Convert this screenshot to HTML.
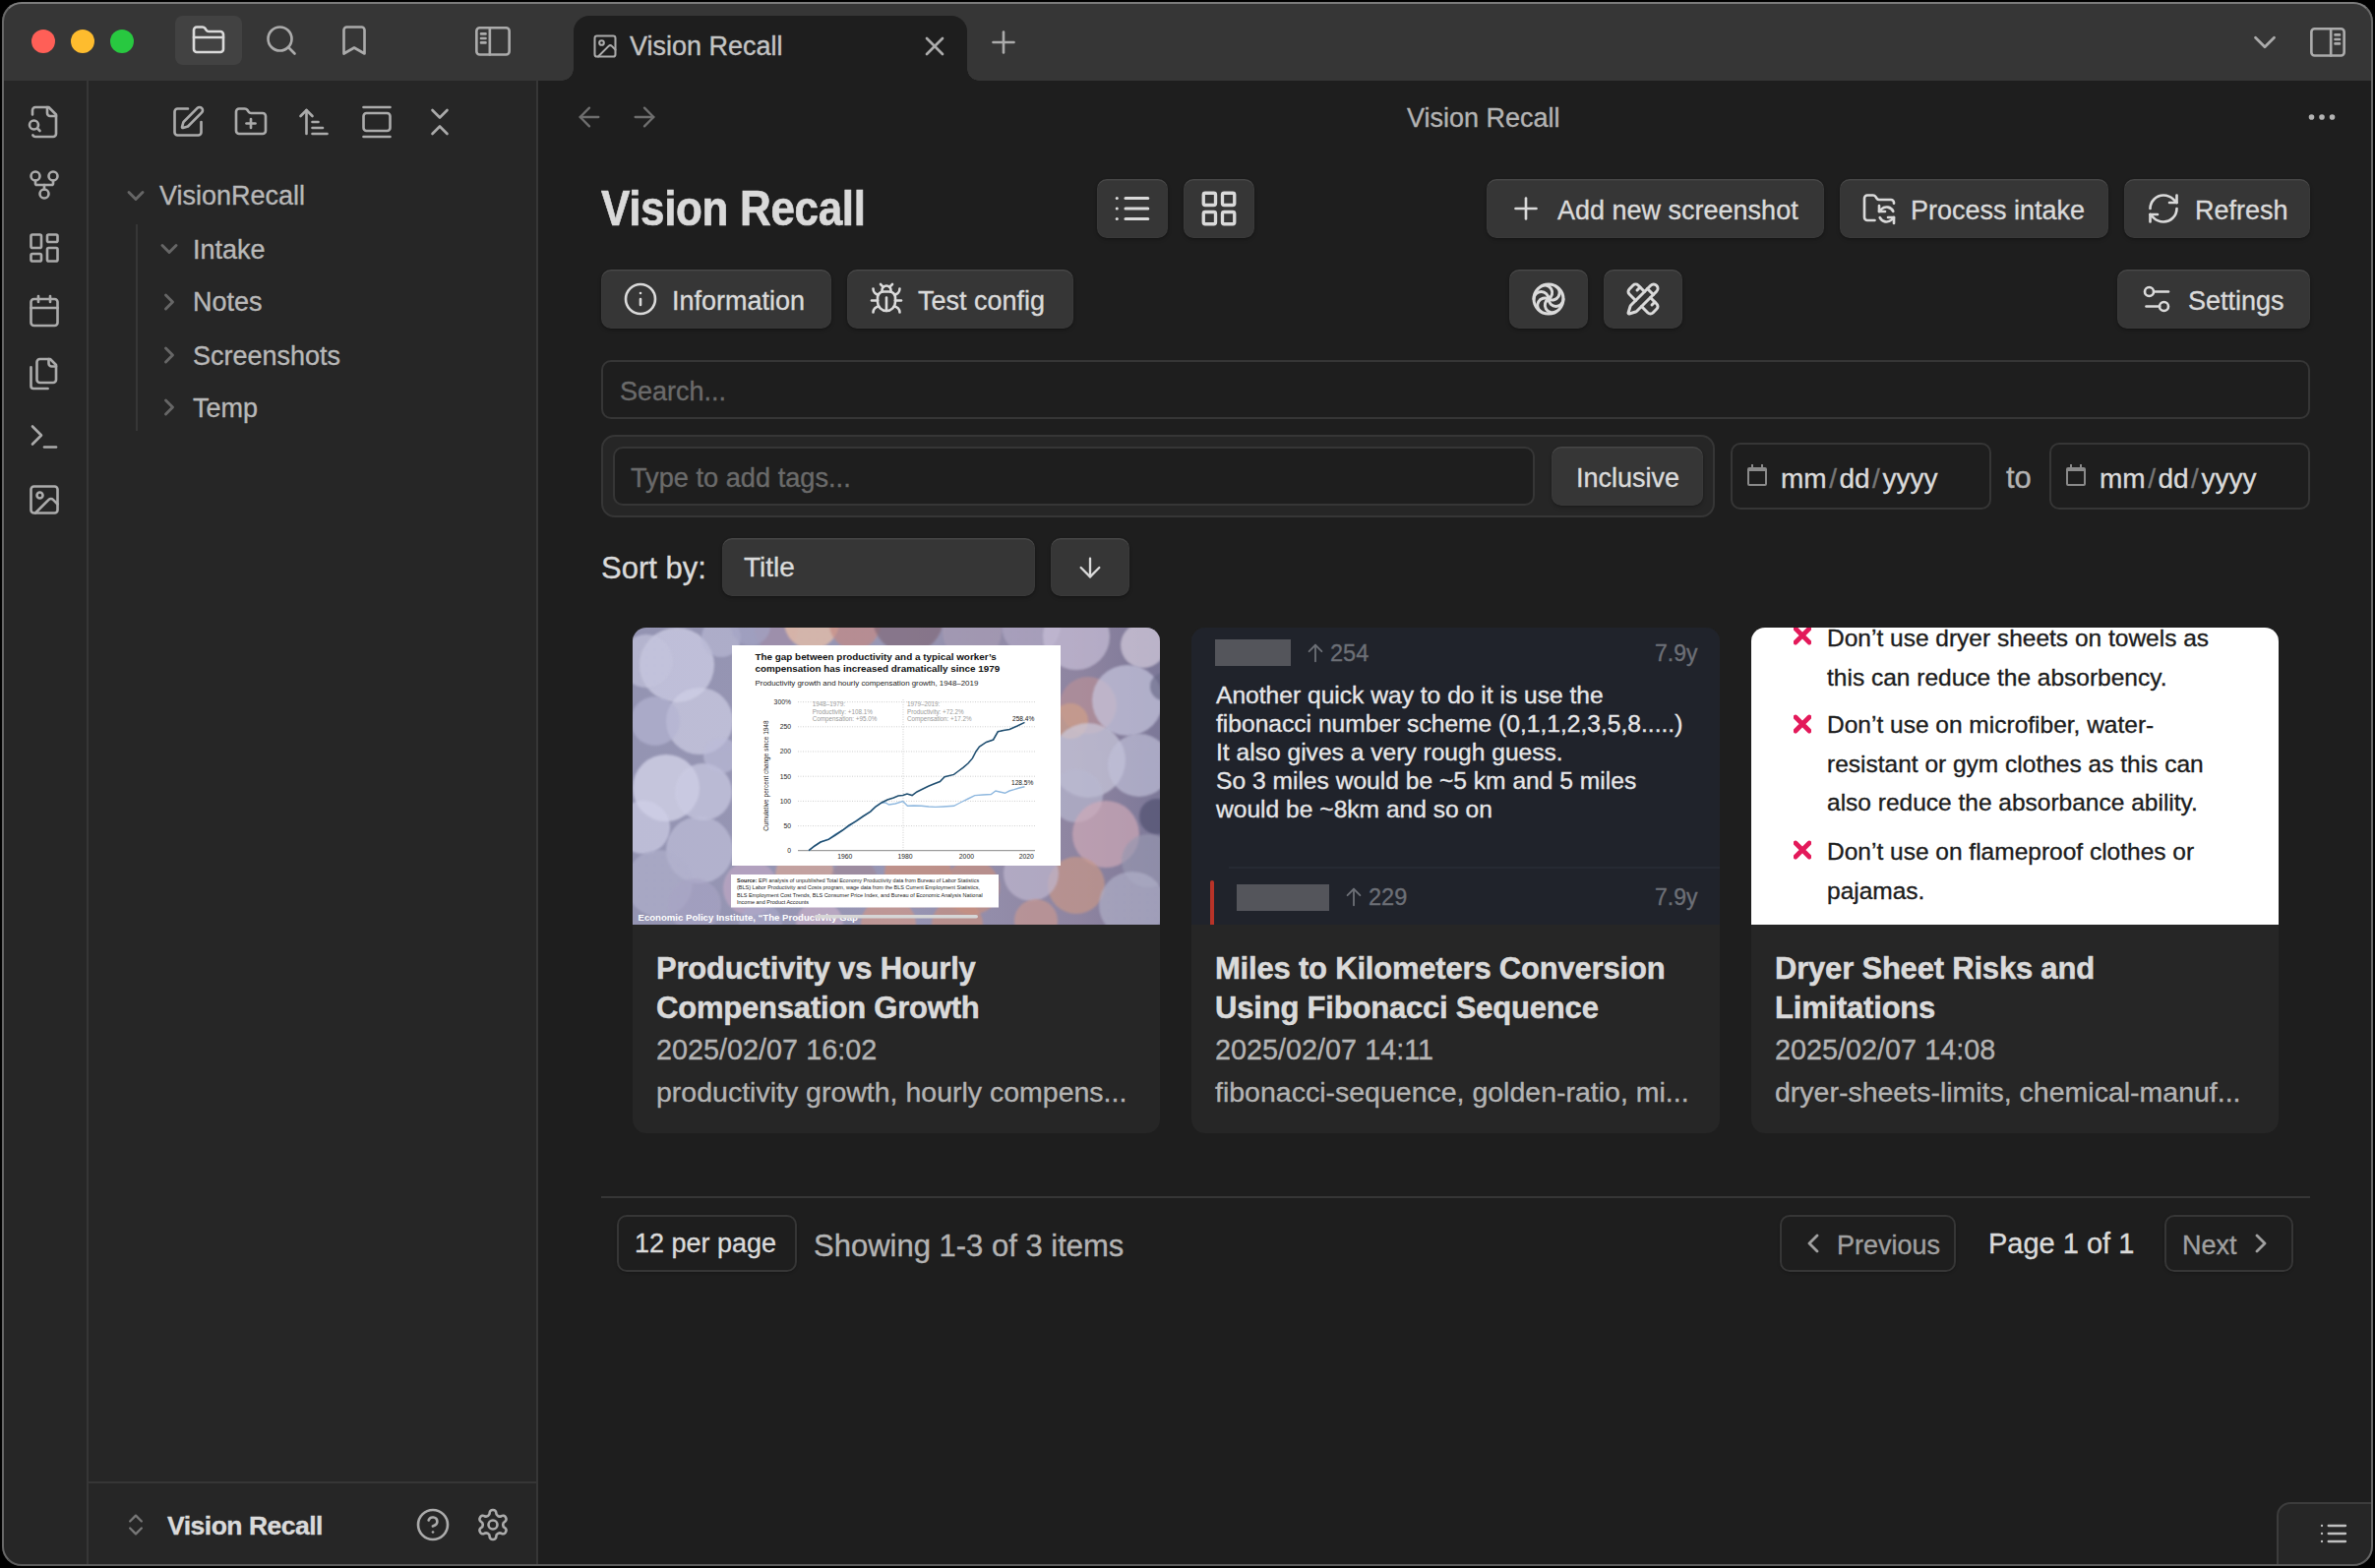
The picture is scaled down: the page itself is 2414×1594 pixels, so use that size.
<!DOCTYPE html>
<html><head><meta charset="utf-8">
<style>
*{box-sizing:border-box;margin:0;padding:0}
html,body{width:2414px;height:1594px;overflow:hidden;background:#1e1e1e}
body{font-family:"Liberation Sans",sans-serif;color:#dadada;position:relative}
.t,.ct{-webkit-text-stroke:0.35px currentColor}
.a{position:absolute}
svg.i{position:absolute;fill:none;stroke:currentColor;stroke-linecap:round;stroke-linejoin:round;overflow:visible}
.frame{position:absolute;left:2px;top:2px;width:2410px;height:1590px;border-radius:20px;border:2px solid #686868;border-top-color:#7c7c7c;border-bottom-color:#5c5c5c;box-shadow:0 0 0 60px #000;pointer-events:none;z-index:50}
.t{position:absolute;white-space:pre;line-height:1}
.btn{position:absolute;background:#363636;border-radius:10px;box-shadow:inset 0 1.5px 0.5px rgba(255,255,255,.08),inset 0 0 0 1px rgba(255,255,255,.02),0 2px 4px rgba(0,0,0,.15),0 1px 2px rgba(0,0,0,.2)}
.inp{position:absolute;border:2px solid #363636;border-radius:10px;background:#1e1e1e}
.ri{color:#ababab}
</style></head><body>
<!-- ===== TITLE BAR ===== -->
<div class="a" style="left:0;top:0;width:2414px;height:82px;background:#363636"></div>
<div class="a" style="left:32px;top:30px;width:24px;height:24px;border-radius:50%;background:#ff5f57"></div>
<div class="a" style="left:72px;top:30px;width:24px;height:24px;border-radius:50%;background:#febc2e"></div>
<div class="a" style="left:112px;top:30px;width:24px;height:24px;border-radius:50%;background:#28c840"></div>
<div class="a" style="left:178px;top:16px;width:68px;height:50px;border-radius:8px;background:#424242"></div>
<svg class="i" style="left:194px;top:23px;color:#dadada" width="36" height="36" viewBox="0 0 24 24" stroke-width="1.75"><path d="M20 20a2 2 0 0 0 2-2V8a2 2 0 0 0-2-2h-7.9a2 2 0 0 1-1.69-.9L9.6 3.9A2 2 0 0 0 7.93 3H4a2 2 0 0 0-2 2v13a2 2 0 0 0 2 2Z"/><path d="M2 10h20"/></svg>
<svg class="i ri" style="left:268px;top:23px" width="36" height="36" viewBox="0 0 24 24" stroke-width="1.75"><circle cx="11" cy="11" r="8"/><path d="m21 21-4.3-4.3"/></svg>
<svg class="i ri" style="left:342px;top:23px" width="36" height="36" viewBox="0 0 24 24" stroke-width="1.75"><path d="m19 21-7-4-7 4V5a2 2 0 0 1 2-2h10a2 2 0 0 1 2 2v16z"/></svg>
<svg class="i ri" style="left:483px;top:23px" width="36" height="36" viewBox="0 0 24 24" stroke-width="1.75"><rect x="0.9" y="3.5" width="22.2" height="18.2" rx="2.2"/><path d="M9.9 3.5v18.2"/><path d="M4 7.6h3M4 10.7h3M4 13.6h3"/></svg>
<!-- tab -->
<div class="a" style="left:583px;top:16px;width:400px;height:66px;background:#1e1e1e;border-radius:16px 16px 0 0"></div>
<div class="a" style="left:571px;top:70px;width:12px;height:12px;background:radial-gradient(circle at 0 0,#363636 11.5px,#1e1e1e 12px)"></div>
<div class="a" style="left:983px;top:70px;width:12px;height:12px;background:radial-gradient(circle at 100% 0,#363636 11.5px,#1e1e1e 12px)"></div>
<svg class="i ri" style="left:601px;top:33px" width="28" height="28" viewBox="0 0 24 24" stroke-width="1.75"><rect width="18" height="18" x="3" y="3" rx="2" ry="2"/><circle cx="9" cy="9" r="2"/><path d="m21 15-3.086-3.086a2 2 0 0 0-2.828 0L6 21"/></svg>
<div class="t" style="left:640px;top:34px;font-size:27px;color:#c4c4c4">Vision Recall</div>
<svg class="i ri" style="left:934px;top:31px" width="32" height="32" viewBox="0 0 24 24" stroke-width="2"><path d="M18 6 6 18"/><path d="m6 6 12 12"/></svg>
<svg class="i ri" style="left:1002px;top:25px" width="36" height="36" viewBox="0 0 24 24" stroke-width="1.75"><path d="M5 12h14"/><path d="M12 5v14"/></svg>
<svg class="i ri" style="left:2283px;top:24px" width="38" height="38" viewBox="0 0 24 24" stroke-width="1.75"><path d="m6 9 6 6 6-6"/></svg>
<svg class="i ri" style="left:2348px;top:24px" width="36" height="36" viewBox="0 0 24 24" stroke-width="1.75"><rect x="0.9" y="3.5" width="22.2" height="18.2" rx="2.2"/><path d="M14.1 3.5v18.2"/><path d="M17 7.6h3M17 10.7h3M17 13.6h3"/></svg>

<!-- ===== RIBBON ===== -->
<div class="a" style="left:0;top:82px;width:88px;height:1513px;background:#262626"></div>
<div class="a" style="left:88px;top:82px;width:2px;height:1513px;background:#363636"></div>
<svg class="i ri" style="left:27px;top:106px" width="36" height="36" viewBox="0 0 24 24" stroke-width="1.75"><path d="M14 2v4a2 2 0 0 0 2 2h4"/><path d="M4.268 21a2 2 0 0 0 1.727 1H18a2 2 0 0 0 2-2V7l-5-5H6a2 2 0 0 0-2 2v3"/><path d="m9 18-1.5-1.5"/><circle cx="5" cy="14" r="3"/></svg>
<svg class="i ri" style="left:27px;top:170px" width="36" height="36" viewBox="0 0 24 24" stroke-width="1.75"><circle cx="12" cy="18" r="3"/><circle cx="6" cy="6" r="3"/><circle cx="18" cy="6" r="3"/><path d="M18 9v2c0 .6-.4 1-1 1H7c-.6 0-1-.4-1-1V9"/><path d="M12 12v3"/></svg>
<svg class="i ri" style="left:27px;top:234px" width="36" height="36" viewBox="0 0 24 24" stroke-width="1.75"><rect width="7" height="9" x="3" y="3" rx="1"/><rect width="7" height="5" x="14" y="3" rx="1"/><rect width="7" height="9" x="14" y="12" rx="1"/><rect width="7" height="5" x="3" y="16" rx="1"/></svg>
<svg class="i ri" style="left:27px;top:298px" width="36" height="36" viewBox="0 0 24 24" stroke-width="1.75"><path d="M8 2v4"/><path d="M16 2v4"/><rect width="18" height="18" x="3" y="4" rx="2"/><path d="M3 10h18"/></svg>
<svg class="i ri" style="left:27px;top:362px" width="36" height="36" viewBox="0 0 24 24" stroke-width="1.75"><path d="M20 7h-3a2 2 0 0 1-2-2V2"/><path d="M9 18a2 2 0 0 1-2-2V4a2 2 0 0 1 2-2h7l4 4v10a2 2 0 0 1-2 2Z"/><path d="M3 7.6v12.8A1.6 1.6 0 0 0 4.6 22h9.8"/></svg>
<svg class="i ri" style="left:27px;top:426px" width="36" height="36" viewBox="0 0 24 24" stroke-width="1.75"><polyline points="4 17 10 11 4 5"/><line x1="12" x2="20" y1="19" y2="19"/></svg>
<svg class="i ri" style="left:27px;top:490px" width="36" height="36" viewBox="0 0 24 24" stroke-width="1.75"><rect width="18" height="18" x="3" y="3" rx="2" ry="2"/><circle cx="9" cy="9" r="2"/><path d="m21 15-3.086-3.086a2 2 0 0 0-2.828 0L6 21"/></svg>

<!-- ===== SIDEBAR ===== -->
<div class="a" style="left:90px;top:82px;width:455px;height:1513px;background:#262626"></div>
<div class="a" style="left:545px;top:82px;width:2px;height:1513px;background:#363636"></div>
<svg class="i ri" style="left:173px;top:106px" width="36" height="36" viewBox="0 0 24 24" stroke-width="1.75"><path d="M12 3H5a2 2 0 0 0-2 2v14a2 2 0 0 0 2 2h14a2 2 0 0 0 2-2v-7"/><path d="M18.375 2.625a1 1 0 0 1 3 3l-9.013 9.014a2 2 0 0 1-.853.505l-2.873.84a.5.5 0 0 1-.62-.62l.84-2.873a2 2 0 0 1 .506-.852z"/></svg>
<svg class="i ri" style="left:237px;top:106px" width="36" height="36" viewBox="0 0 24 24" stroke-width="1.75"><path d="M12 10v6"/><path d="M9 13h6"/><path d="M20 20a2 2 0 0 0 2-2V8a2 2 0 0 0-2-2h-7.9a2 2 0 0 1-1.69-.9L9.6 3.9A2 2 0 0 0 7.93 3H4a2 2 0 0 0-2 2v13a2 2 0 0 0 2 2Z"/></svg>
<svg class="i ri" style="left:301px;top:106px" width="36" height="36" viewBox="0 0 24 24" stroke-width="1.75"><path d="m3 8 4-4 4 4"/><path d="M7 4v16"/><path d="M11 12h4"/><path d="M11 16h7"/><path d="M11 20h10"/></svg>
<svg class="i ri" style="left:365px;top:106px" width="36" height="36" viewBox="0 0 24 24" stroke-width="1.75"><path d="M3 2h18"/><rect width="18" height="12" x="3" y="6" rx="2"/><path d="M3 22h18"/></svg>
<svg class="i ri" style="left:429px;top:106px" width="36" height="36" viewBox="0 0 24 24" stroke-width="1.75"><path d="m7 20 5-5 5 5"/><path d="m7 4 5 5 5-5"/></svg>
<!-- tree -->
<svg class="i" style="left:124px;top:185px;color:#666" width="28" height="28" viewBox="0 0 24 24" stroke-width="2.5"><path d="m6 9 6 6 6-6"/></svg>
<div class="t" style="left:162px;top:186px;font-size:27px;color:#b8b8b8">VisionRecall</div>
<div class="a" style="left:138px;top:228px;width:2px;height:210px;background:#363636"></div>
<svg class="i" style="left:158px;top:239px;color:#666" width="28" height="28" viewBox="0 0 24 24" stroke-width="2.5"><path d="m6 9 6 6 6-6"/></svg>
<div class="t" style="left:196px;top:241px;font-size:27px;color:#b8b8b8">Intake</div>
<svg class="i" style="left:158px;top:293px;color:#666" width="28" height="28" viewBox="0 0 24 24" stroke-width="2.5"><path d="m9 18 6-6-6-6"/></svg>
<div class="t" style="left:196px;top:294px;font-size:27px;color:#b8b8b8">Notes</div>
<svg class="i" style="left:158px;top:347px;color:#666" width="28" height="28" viewBox="0 0 24 24" stroke-width="2.5"><path d="m9 18 6-6-6-6"/></svg>
<div class="t" style="left:196px;top:349px;font-size:27px;color:#b8b8b8">Screenshots</div>
<svg class="i" style="left:158px;top:400px;color:#666" width="28" height="28" viewBox="0 0 24 24" stroke-width="2.5"><path d="m9 18 6-6-6-6"/></svg>
<div class="t" style="left:196px;top:402px;font-size:27px;color:#b8b8b8">Temp</div>
<!-- sidebar footer -->
<div class="a" style="left:90px;top:1506px;width:455px;height:2px;background:#363636"></div>
<svg class="i" style="left:124px;top:1536px;color:#777" width="28" height="28" viewBox="0 0 24 24" stroke-width="2"><path d="m7 15 5 5 5-5"/><path d="m7 9 5-5 5 5"/></svg>
<div class="t" style="left:170px;top:1538px;font-size:26.5px;letter-spacing:-0.5px;font-weight:700;color:#dadada">Vision Recall</div>
<svg class="i ri" style="left:422px;top:1532px" width="36" height="36" viewBox="0 0 24 24" stroke-width="1.75"><circle cx="12" cy="12" r="10"/><path d="M9.09 9a3 3 0 0 1 5.83 1c0 2-3 3-3 3"/><path d="M12 17h.01"/></svg>
<svg class="i ri" style="left:483px;top:1532px" width="36" height="36" viewBox="0 0 24 24" stroke-width="1.75"><path d="M12.22 2h-.44a2 2 0 0 0-2 2v.18a2 2 0 0 1-1 1.73l-.43.25a2 2 0 0 1-2 0l-.15-.08a2 2 0 0 0-2.73.73l-.22.38a2 2 0 0 0 .73 2.73l.15.1a2 2 0 0 1 1 1.72v.51a2 2 0 0 1-1 1.74l-.15.09a2 2 0 0 0-.73 2.73l.22.38a2 2 0 0 0 2.73.73l.15-.08a2 2 0 0 1 2 0l.43.25a2 2 0 0 1 1 1.73V20a2 2 0 0 0 2 2h.44a2 2 0 0 0 2-2v-.18a2 2 0 0 1 1-1.73l.43-.25a2 2 0 0 1 2 0l.15.08a2 2 0 0 0 2.73-.73l.22-.39a2 2 0 0 0-.73-2.73l-.15-.08a2 2 0 0 1-1-1.74v-.5a2 2 0 0 1 1-1.74l.15-.09a2 2 0 0 0 .73-2.73l-.22-.38a2 2 0 0 0-2.73-.73l-.15.08a2 2 0 0 1-2 0l-.43-.25a2 2 0 0 1-1-1.73V4a2 2 0 0 0-2-2z"/><circle cx="12" cy="12" r="3"/></svg>

<!-- ===== MAIN ===== -->
<!-- view header -->
<svg class="i" style="left:583px;top:103px;color:#6e6e6e" width="32" height="32" viewBox="0 0 24 24" stroke-width="1.75"><path d="m12 19-7-7 7-7"/><path d="M19 12H5"/></svg>
<svg class="i" style="left:639px;top:103px;color:#6e6e6e" width="32" height="32" viewBox="0 0 24 24" stroke-width="1.75"><path d="M5 12h14"/><path d="m12 5 7 7-7 7"/></svg>
<div class="t" style="left:1430px;top:107px;font-size:27px;color:#b3b3b3">Vision Recall</div>
<svg class="i" style="left:2342px;top:101px;color:#b3b3b3" width="36" height="36" viewBox="0 0 24 24" stroke-width="1.75"><circle cx="12" cy="12" r="1" fill="currentColor"/><circle cx="19" cy="12" r="1" fill="currentColor"/><circle cx="5" cy="12" r="1" fill="currentColor"/></svg>

<!-- heading -->
<div class="t" style="left:611px;top:187px;font-size:50px;font-weight:700;letter-spacing:-0.4px;transform:scaleX(0.88);transform-origin:0 0;-webkit-text-stroke:0.7px #dadada;color:#dadada">Vision Recall</div>
<div class="btn" style="left:1115px;top:182px;width:72px;height:60px"></div>
<svg class="i" style="left:1130px;top:191px;color:#dadada" width="42" height="42" viewBox="0 0 24 24" stroke-width="1.75"><path d="M3 12h.01"/><path d="M3 18h.01"/><path d="M3 6h.01"/><path d="M8 12h13"/><path d="M8 18h13"/><path d="M8 6h13"/></svg>
<div class="btn" style="left:1203px;top:182px;width:72px;height:60px"></div>
<svg class="i" style="left:1218px;top:191px;color:#dadada" width="42" height="42" viewBox="0 0 24 24" stroke-width="1.9"><rect width="7" height="7" x="3" y="3" rx="1"/><rect width="7" height="7" x="14" y="3" rx="1"/><rect width="7" height="7" x="14" y="14" rx="1"/><rect width="7" height="7" x="3" y="14" rx="1"/></svg>

<div class="btn" style="left:1511px;top:182px;width:343px;height:60px"></div>
<svg class="i" style="left:1533px;top:194px;color:#dadada" width="36" height="36" viewBox="0 0 24 24" stroke-width="1.75"><path d="M5 12h14"/><path d="M12 5v14"/></svg>
<div class="t" style="left:1583px;top:201px;font-size:27px;color:#dadada">Add new screenshot</div>
<div class="btn" style="left:1870px;top:182px;width:273px;height:60px"></div>
<svg class="i" style="left:1892px;top:194px;color:#dadada" width="36" height="36" viewBox="0 0 24 24" stroke-width="1.75"><path d="M9 20H4a2 2 0 0 1-2-2V5a2 2 0 0 1 2-2h3.9a2 2 0 0 1 1.69.9l.81 1.2a2 2 0 0 0 1.67.9H20a2 2 0 0 1 2 2v.5"/><path d="M12 10v4h4"/><path d="m12 14 1.535-1.605a5 5 0 0 1 8 1.5"/><path d="M22 22v-4h-4"/><path d="m22 18-1.535 1.605a5 5 0 0 1-8-1.5"/></svg>
<div class="t" style="left:1942px;top:201px;font-size:27px;color:#dadada">Process intake</div>
<div class="btn" style="left:2159px;top:182px;width:189px;height:60px"></div>
<svg class="i" style="left:2181px;top:194px;color:#dadada" width="36" height="36" viewBox="0 0 24 24" stroke-width="1.75"><path d="M3 12a9 9 0 0 1 9-9 9.75 9.75 0 0 1 6.74 2.74L21 8"/><path d="M21 3v5h-5"/><path d="M21 12a9 9 0 0 1-9 9 9.75 9.75 0 0 1-6.74-2.74L3 16"/><path d="M8 16H3v5"/></svg>
<div class="t" style="left:2231px;top:201px;font-size:27px;color:#dadada">Refresh</div>

<!-- row 2 -->
<div class="btn" style="left:611px;top:274px;width:234px;height:60px"></div>
<svg class="i" style="left:633px;top:286px;color:#dadada" width="36" height="36" viewBox="0 0 24 24" stroke-width="1.75"><circle cx="12" cy="12" r="10"/><path d="M12 16v-4"/><path d="M12 8h.01"/></svg>
<div class="t" style="left:683px;top:293px;font-size:27px;color:#dadada">Information</div>
<div class="btn" style="left:861px;top:274px;width:230px;height:60px"></div>
<svg class="i" style="left:883px;top:286px;color:#dadada" width="36" height="36" viewBox="0 0 24 24" stroke-width="1.75"><path d="m8 2 1.88 1.88"/><path d="M14.12 3.88 16 2"/><path d="M9 7.13v-1a3.003 3.003 0 1 1 6 0v1"/><path d="M12 20c-3.3 0-6-2.7-6-6v-3a4 4 0 0 1 4-4h4a4 4 0 0 1 4 4v3c0 3.3-2.7 6-6 6"/><path d="M12 20v-9"/><path d="M6.530 9C4.6 8.8 3 7.1 3 5"/><path d="M6 13H2"/><path d="M3 21c0-2.1 1.7-3.9 3.8-4"/><path d="M20.97 5c0 2.1-1.6 3.8-3.5 4"/><path d="M22 13h-4"/><path d="M17.2 17c2.1.1 3.8 1.9 3.8 4"/></svg>
<div class="t" style="left:933px;top:293px;font-size:27px;color:#dadada">Test config</div>
<div class="btn" style="left:1534px;top:274px;width:80px;height:60px"></div>
<svg class="i" style="left:1556px;top:286px;color:#dadada" width="36" height="36" viewBox="0 0 24 24" stroke-width="2"><path d="M22 12a1 1 0 0 1-10 0 1 1 0 0 0-10 0"/><path d="M7 20.7a1 1 0 1 1 5-8.7 1 1 0 1 0 5-8.6"/><path d="M7 3.3a1 1 0 1 1 5 8.6 1 1 0 1 0 5 8.6"/><circle cx="12" cy="12" r="10"/></svg>
<div class="btn" style="left:1630px;top:274px;width:80px;height:60px"></div>
<svg class="i" style="left:1652px;top:286px;color:#dadada" width="36" height="36" viewBox="0 0 24 24" stroke-width="2"><path d="M13 7 8.7 2.7a2.41 2.41 0 0 0-3.4 0L2.7 5.3a2.41 2.41 0 0 0 0 3.4L7 13"/><path d="m8 6 2-2"/><path d="m18 16 2-2"/><path d="m17 11 4.3 4.3c.94.94.94 2.460 0 3.4l-2.6 2.6c-.94.94-2.46.94-3.4 0L11 17"/><path d="M21.174 6.812a1 1 0 0 0-3.986-3.987L3.842 16.174a2 2 0 0 0-.5.83l-1.321 4.352a.5.5 0 0 0 .623.622l4.353-1.32a2 2 0 0 0 .83-.497z"/><path d="m15 5 4 4"/></svg>
<div class="btn" style="left:2152px;top:274px;width:196px;height:60px"></div>
<svg class="i" style="left:2174px;top:286px;color:#dadada" width="36" height="36" viewBox="0 0 24 24" stroke-width="1.75"><path d="M20 7h-9"/><path d="M14 17H5"/><circle cx="17" cy="17" r="3"/><circle cx="7" cy="7" r="3"/></svg>
<div class="t" style="left:2224px;top:293px;font-size:27px;color:#dadada">Settings</div>

<!-- search -->
<div class="inp" style="left:611px;top:366px;width:1737px;height:60px"></div>
<div class="t" style="left:630px;top:385px;font-size:27px;color:#6a6a6a">Search...</div>

<!-- tags -->
<div class="a" style="left:611px;top:442px;width:1132px;height:84px;background:#262626;border:2px solid #363636;border-radius:14px"></div>
<div class="inp" style="left:623px;top:454px;width:937px;height:60px"></div>
<div class="t" style="left:641px;top:472px;font-size:27.2px;color:#6a6a6a">Type to add tags...</div>
<div class="btn" style="left:1577px;top:454px;width:154px;height:60px"></div>
<div class="t" style="left:1602px;top:473px;font-size:27px;color:#dadada">Inclusive</div>

<!-- dates -->
<div class="inp" style="left:1759px;top:450px;width:265px;height:68px"></div>
<div class="a" style="left:1776px;top:475px;width:20px;height:19px;border:2.2px solid #8a8a8a;border-top-width:4.5px;border-radius:2px"></div><div class="a" style="left:1780px;top:472px;width:2px;height:4px;background:#8a8a8a"></div><div class="a" style="left:1790px;top:472px;width:2px;height:4px;background:#8a8a8a"></div>
<div class="t" style="left:1810px;top:473px;font-size:28px;color:#dadada">mm<span style="color:#777;margin:0 2.5px">/</span>dd<span style="color:#777;margin:0 2.5px">/</span>yyyy</div>
<div class="t" style="left:2039px;top:470px;font-size:31px;color:#b3b3b3">to</div>
<div class="inp" style="left:2083px;top:450px;width:265px;height:68px"></div>
<div class="a" style="left:2100px;top:475px;width:20px;height:19px;border:2.2px solid #8a8a8a;border-top-width:4.5px;border-radius:2px"></div><div class="a" style="left:2104px;top:472px;width:2px;height:4px;background:#8a8a8a"></div><div class="a" style="left:2114px;top:472px;width:2px;height:4px;background:#8a8a8a"></div>
<div class="t" style="left:2134px;top:473px;font-size:28px;color:#dadada">mm<span style="color:#777;margin:0 2.5px">/</span>dd<span style="color:#777;margin:0 2.5px">/</span>yyyy</div>

<!-- sort -->
<div class="t" style="left:611px;top:562px;font-size:31px;color:#dadada">Sort by:</div>
<div class="btn" style="left:734px;top:547px;width:318px;height:59px"></div>
<div class="t" style="left:756px;top:563px;font-size:28px;color:#dadada">Title</div>
<div class="btn" style="left:1068px;top:547px;width:80px;height:59px"></div>
<svg class="i" style="left:1092px;top:561px;color:#dadada" width="32" height="32" viewBox="0 0 24 24" stroke-width="1.75"><path d="M12 5v14"/><path d="m19 12-7 7-7-7"/></svg>

<!-- ===== CARDS ===== -->
<style>
.card{position:absolute;top:638px;width:536px;height:514px;background:#262626;border-radius:14px;overflow:hidden}
.card .img{position:absolute;left:0;top:0;width:536px;height:302px;overflow:hidden}
.bk{position:absolute;border-radius:50%;opacity:.85;filter:blur(1px)}
.ct{position:absolute;left:24px;white-space:pre;line-height:1}
.ctitle{font-size:31px;font-weight:700;letter-spacing:-0.2px;color:#dadada;-webkit-text-stroke:0.5px #dadada;line-height:39.5px;top:965px}
.cdate{font-size:28.8px;color:#b3b3b3}
.ctags{font-size:28.5px;color:#b3b3b3}
</style>
<div class="card" style="left:643px">
  <div class="img" style="background:linear-gradient(90deg,#9494b2 0%,#9896b4 50%,#8e84a0 85%,#7c7898 100%)">
<div class="bk" style="left:7px;top:0px;width:76px;height:76px;background:radial-gradient(circle,#d4d4eacc 0,#d4d4eacc 84%,#d4d4ea 94%,#d4d4ea00 100%)"></div>
<div class="bk" style="left:-13px;top:7px;width:54px;height:54px;background:radial-gradient(circle,#c4c4dccc 0,#c4c4dccc 84%,#c4c4dc 94%,#c4c4dc00 100%)"></div>
<div class="bk" style="left:34px;top:61px;width:68px;height:68px;background:radial-gradient(circle,#d0d0e6cc 0,#d0d0e6cc 84%,#d0d0e6 94%,#d0d0e600 100%)"></div>
<div class="bk" style="left:-2px;top:70px;width:50px;height:50px;background:radial-gradient(circle,#b4b4d2cc 0,#b4b4d2cc 84%,#b4b4d2 94%,#b4b4d200 100%)"></div>
<div class="bk" style="left:0px;top:129px;width:68px;height:68px;background:radial-gradient(circle,#dcdcf0cc 0,#dcdcf0cc 84%,#dcdcf0 94%,#dcdcf000 100%)"></div>
<div class="bk" style="left:43px;top:138px;width:58px;height:58px;background:radial-gradient(circle,#ccccE4cc 0,#ccccE4cc 84%,#ccccE4 94%,#ccccE400 100%)"></div>
<div class="bk" style="left:-16px;top:176px;width:54px;height:54px;background:radial-gradient(circle,#d0d0e8cc 0,#d0d0e8cc 84%,#d0d0e8 94%,#d0d0e800 100%)"></div>
<div class="bk" style="left:34px;top:192px;width:68px;height:68px;background:radial-gradient(circle,#c0c0dacc 0,#c0c0dacc 84%,#c0c0da 94%,#c0c0da00 100%)"></div>
<div class="bk" style="left:-7px;top:226px;width:68px;height:68px;background:radial-gradient(circle,#b0b0cccc 0,#b0b0cccc 84%,#b0b0cc 94%,#b0b0cc00 100%)"></div>
<div class="bk" style="left:36px;top:255px;width:54px;height:54px;background:radial-gradient(circle,#a8a4c4cc 0,#a8a4c4cc 84%,#a8a4c4 94%,#a8a4c400 100%)"></div>
<div class="bk" style="left:70px;top:-10px;width:40px;height:40px;background:radial-gradient(circle,#b8b8d4cc 0,#b8b8d4cc 84%,#b8b8d4 94%,#b8b8d400 100%)"></div>
<div class="bk" style="left:72px;top:112px;width:36px;height:36px;background:radial-gradient(circle,#bcbcd8cc 0,#bcbcd8cc 84%,#bcbcd8 94%,#bcbcd800 100%)"></div>
<div class="bk" style="left:124px;top:-20px;width:44px;height:44px;background:radial-gradient(circle,#a08ca8cc 0,#a08ca8cc 84%,#a08ca8 94%,#a08ca800 100%)"></div>
<div class="bk" style="left:154px;top:-34px;width:56px;height:56px;background:radial-gradient(circle,#f0c4a8cc 0,#f0c4a8cc 84%,#f0c4a8 94%,#f0c4a800 100%)"></div>
<div class="bk" style="left:200px;top:-30px;width:52px;height:52px;background:radial-gradient(circle,#c48a84cc 0,#c48a84cc 84%,#c48a84 94%,#c48a8400 100%)"></div>
<div class="bk" style="left:244px;top:-46px;width:72px;height:72px;background:radial-gradient(circle,#806878cc 0,#806878cc 84%,#806878 94%,#80687800 100%)"></div>
<div class="bk" style="left:315px;top:-26px;width:60px;height:60px;background:radial-gradient(circle,#a89cb4cc 0,#a89cb4cc 84%,#a89cb4 94%,#a89cb400 100%)"></div>
<div class="bk" style="left:375px;top:-32px;width:60px;height:60px;background:radial-gradient(circle,#b0a8c4cc 0,#b0a8c4cc 84%,#b0a8c4 94%,#b0a8c400 100%)"></div>
<div class="bk" style="left:100px;top:-22px;width:40px;height:40px;background:radial-gradient(circle,#a4a4c4cc 0,#a4a4c4cc 84%,#a4a4c4 94%,#a4a4c400 100%)"></div>
<div class="bk" style="left:417px;top:-25px;width:68px;height:68px;background:radial-gradient(circle,#c8c0d8cc 0,#c8c0d8cc 84%,#c8c0d8 94%,#c8c0d800 100%)"></div>
<div class="bk" style="left:496px;top:-5px;width:46px;height:46px;background:radial-gradient(circle,#d8d0e0cc 0,#d8d0e0cc 84%,#d8d0e0 94%,#d8d0e000 100%)"></div>
<div class="bk" style="left:434px;top:50px;width:58px;height:58px;background:radial-gradient(circle,#b89098cc 0,#b89098cc 84%,#b89098 94%,#b8909800 100%)"></div>
<div class="bk" style="left:467px;top:38px;width:72px;height:72px;background:radial-gradient(circle,#c8c8e0cc 0,#c8c8e0cc 84%,#c8c8e0 94%,#c8c8e000 100%)"></div>
<div class="bk" style="left:427px;top:77px;width:36px;height:36px;background:radial-gradient(circle,#d0a088cc 0,#d0a088cc 84%,#d0a088 94%,#d0a08800 100%)"></div>
<div class="bk" style="left:425px;top:97px;width:76px;height:76px;background:radial-gradient(circle,#ccccdfcc 0,#ccccdfcc 84%,#ccccdf 94%,#ccccdf00 100%)"></div>
<div class="bk" style="left:483px;top:108px;width:64px;height:64px;background:radial-gradient(circle,#c0c0d8cc 0,#c0c0d8cc 84%,#c0c0d8 94%,#c0c0d800 100%)"></div>
<div class="bk" style="left:424px;top:144px;width:54px;height:54px;background:radial-gradient(circle,#b8b8d0cc 0,#b8b8d0cc 84%,#b8b8d0 94%,#b8b8d000 100%)"></div>
<div class="bk" style="left:447px;top:176px;width:68px;height:68px;background:radial-gradient(circle,#d0aab8cc 0,#d0aab8cc 84%,#d0aab8 94%,#d0aab800 100%)"></div>
<div class="bk" style="left:515px;top:174px;width:36px;height:36px;background:radial-gradient(circle,#505070cc 0,#505070cc 84%,#505070 94%,#50507000 100%)"></div>
<div class="bk" style="left:497px;top:210px;width:54px;height:54px;background:radial-gradient(circle,#9898b0cc 0,#9898b0cc 84%,#9898b0 94%,#9898b000 100%)"></div>
<div class="bk" style="left:422px;top:233px;width:58px;height:58px;background:radial-gradient(circle,#c89888cc 0,#c89888cc 84%,#c89888 94%,#c8988800 100%)"></div>
<div class="bk" style="left:474px;top:248px;width:68px;height:68px;background:radial-gradient(circle,#b0b0c8cc 0,#b0b0c8cc 84%,#b0b0c8 94%,#b0b0c800 100%)"></div>
<div class="bk" style="left:526px;top:46px;width:28px;height:28px;background:radial-gradient(circle,#6a6a88cc 0,#6a6a88cc 84%,#6a6a88 94%,#6a6a8800 100%)"></div>
<div class="bk" style="left:92px;top:237px;width:56px;height:56px;background:radial-gradient(circle,#c0a8c4cc 0,#c0a8c4cc 84%,#c0a8c4 94%,#c0a8c400 100%)"></div>
<div class="bk" style="left:145px;top:222px;width:60px;height:60px;background:radial-gradient(circle,#d8a898cc 0,#d8a898cc 84%,#d8a898 94%,#d8a89800 100%)"></div>
<div class="bk" style="left:201px;top:234px;width:48px;height:48px;background:radial-gradient(circle,#a08898cc 0,#a08898cc 84%,#a08898 94%,#a0889800 100%)"></div>
<div class="bk" style="left:256px;top:216px;width:68px;height:68px;background:radial-gradient(circle,#d09078cc 0,#d09078cc 84%,#d09078 94%,#d0907800 100%)"></div>
<div class="bk" style="left:317px;top:236px;width:56px;height:56px;background:radial-gradient(circle,#c89080cc 0,#c89080cc 84%,#c89080 94%,#c8908000 100%)"></div>
<div class="bk" style="left:377px;top:222px;width:56px;height:56px;background:radial-gradient(circle,#c0b8d0cc 0,#c0b8d0cc 84%,#c0b8d0 94%,#c0b8d000 100%)"></div>
<div class="bk" style="left:388px;top:276px;width:44px;height:44px;background:radial-gradient(circle,#c89890cc 0,#c89890cc 84%,#c89890 94%,#c8989000 100%)"></div>
<div class="bk" style="left:166px;top:278px;width:48px;height:48px;background:radial-gradient(circle,#c8b0c8cc 0,#c8b0c8cc 84%,#c8b0c8 94%,#c8b0c800 100%)"></div>
<div class="bk" style="left:232px;top:274px;width:56px;height:56px;background:radial-gradient(circle,#d09888cc 0,#d09888cc 84%,#d09888 94%,#d0988800 100%)"></div>
<div class="bk" style="left:108px;top:280px;width:44px;height:44px;background:radial-gradient(circle,#a8a8c8cc 0,#a8a8c8cc 84%,#a8a8c8 94%,#a8a8c800 100%)"></div>
<div class="bk" style="left:304px;top:276px;width:52px;height:52px;background:radial-gradient(circle,#c89080cc 0,#c89080cc 84%,#c89080 94%,#c8908000 100%)"></div>
    <svg width="536" height="302" style="position:absolute;left:0;top:0" font-family="Liberation Sans">
      <rect x="101" y="18" width="334" height="224" fill="#fff"/>
      <g transform="translate(101,18)">
        <text x="23.5" y="14.7" font-size="9.9" font-weight="700" fill="#111">The gap between productivity and a typical worker’s</text>
        <text x="23.5" y="26.5" font-size="9.9" font-weight="700" fill="#111">compensation has increased dramatically since 1979</text>
        <text x="23.5" y="40.6" font-size="7.9" fill="#222">Productivity growth and hourly compensation growth, 1948–2019</text>
        <g stroke="#bbb" stroke-width="0.7" stroke-dasharray="1 1.5">
          <line x1="67" x2="308" y1="57.6" y2="57.6"/><line x1="67" x2="308" y1="82.8" y2="82.8"/><line x1="67" x2="308" y1="108" y2="108"/><line x1="67" x2="308" y1="133.2" y2="133.2"/><line x1="67" x2="308" y1="158.4" y2="158.4"/><line x1="67" x2="308" y1="183.6" y2="183.6"/>
          <line x1="174" x2="174" y1="55" y2="208"/>
        </g>
        <line x1="67" x2="308" y1="208.7" y2="208.7" stroke="#666" stroke-width="0.8"/>
        <g font-size="6.8" fill="#222" text-anchor="end">
          <text x="60" y="60">300%</text><text x="60" y="85.2">250</text><text x="60" y="110.4">200</text><text x="60" y="135.6">150</text><text x="60" y="160.8">100</text><text x="60" y="186">50</text><text x="60" y="211.2">0</text>
        </g>
        <g font-size="6.8" fill="#222" text-anchor="middle">
          <text x="114.7" y="217">1960</text><text x="176" y="217">1980</text><text x="238.4" y="217">2000</text><text x="299.3" y="217">2020</text>
        </g>
        <g font-size="6.3" fill="#999">
          <text x="81.7" y="62">1948–1979:</text><text x="81.7" y="69.5">Productivity: +108.1%</text><text x="81.7" y="77">Compensation: +95.0%</text>
          <text x="178" y="62">1979–2019:</text><text x="178" y="69.5">Productivity: +72.2%</text><text x="178" y="77">Compensation: +17.2%</text>
        </g>
        <text font-size="6.5" fill="#222" text-anchor="middle" transform="translate(36.5,132.6) rotate(-90)">Cumulative percent change since 1948</text>
        <text x="285" y="76.5" font-size="6.6" fill="#111">258.4%</text>
        <text x="284" y="142" font-size="6.6" fill="#111">128.5%</text>
        <polyline fill="none" stroke="#8fb8df" stroke-width="1.4" points="78,208.7 84,204 90,200 98.2,197 105,192 112.4,188 119,184 126.5,178 133,174 140.7,169 146,164 152.5,159.7 156,160 159.5,162 166,161 173.7,158.5 178.4,163.3 185,163 192.5,163.3 200,164 206.7,164.4 215,164 225.5,163.3 230,161 234.9,158.5 240,156 246.8,152.6 255,152 263.3,151.5 268,148 272,149 277.4,150.3 282,148 286.8,146.7 292,145 297.5,143.7"/>
        <polyline fill="none" stroke="#1f4e70" stroke-width="1.55" points="78,208.7 84,204 90,200 98.2,197.4 105,193 112.4,188 119,183 126.5,178.6 133,174 140.7,169.1 146,164 152.5,159.7 158,157 164.3,155 169,153 173.7,152.6 178,151 183.1,152.6 188,149 192.5,146.7 199.6,143.2 205,141 211.4,138.5 216.1,133.8 225.5,131.4 230,128 234.9,124.3 240,120 244.4,114.9 248,108 251.5,103.1 258.5,98.4 265.6,96 270.3,87.8 276,86.5 282.1,85.4 290,82 297.5,78.4"/>
      </g>
      <rect x="100" y="251" width="272" height="33.5" fill="#fff"/>
      <g font-size="5.5" fill="#222" transform="translate(106,258.5)" textLength="262">
        <text x="0" y="0"><tspan font-weight="700">Source:</tspan> EPI analysis of unpublished Total Economy Productivity data from Bureau of Labor Statistics</text>
        <text x="0" y="7.6">(BLS) Labor Productivity and Costs program, wage data from the BLS Current Employment Statistics,</text>
        <text x="0" y="15.2">BLS Employment Cost Trends, BLS Consumer Price Index, and Bureau of Economic Analysis National</text>
        <text x="0" y="22.8">Income and Product Accounts</text>
      </g>
      <text x="5.5" y="298" font-size="9.6" font-weight="700" fill="#fff">Economic Policy Institute, “The Productivity Gap”</text>
      <rect x="185" y="292" width="166" height="3.6" rx="1.8" fill="#d6d6d6"/>
    </svg>
  </div>
  <div class="ct ctitle" style="top:327px">Productivity vs Hourly
Compensation Growth</div>
  <div class="ct cdate" style="top:415px">2025/02/07 16:02</div>
  <div class="ct ctags" style="top:458px">productivity growth, hourly compens...</div>
</div>

<div class="card" style="left:1211px;width:537px">
  <div class="img" style="background:#20232b;width:537px">
    <div class="a" style="left:24px;top:12px;width:77px;height:27px;background:#54555b"></div>
    <svg class="i" style="left:115px;top:15px;color:#6c6f76" width="22" height="22" viewBox="0 0 24 24" stroke-width="2"><path d="M12 21V3"/><path d="m5 10 7-7 7 7"/></svg>
    <div class="t" style="left:141px;top:14.5px;font-size:23.5px;color:#6c6f76">254</div>
    <div class="t" style="left:471px;top:14.5px;font-size:23px;color:#6c6f76">7.9y</div>
    <div class="t" style="left:25px;top:53.5px;font-size:24.6px;line-height:29px;color:#e6e6e8">Another quick way to do it is use the
fibonacci number scheme (0,1,1,2,3,5,8.....)
It also gives a very rough guess.
So 3 miles would be ~5 km and 5 miles
would be ~8km and so on</div>
    <div class="a" style="left:38px;top:243px;width:499px;height:2px;background:#262a33"></div>
    <div class="a" style="left:19px;top:257px;width:4px;height:45px;background:#b83328;border-radius:2px 2px 0 0"></div>
    <div class="a" style="left:46px;top:261px;width:94px;height:27px;background:#54555b"></div>
    <svg class="i" style="left:154px;top:263px;color:#6c6f76" width="22" height="22" viewBox="0 0 24 24" stroke-width="2"><path d="M12 21V3"/><path d="m5 10 7-7 7 7"/></svg>
    <div class="t" style="left:180px;top:263px;font-size:23.5px;color:#6c6f76">229</div>
    <div class="t" style="left:471px;top:263px;font-size:23px;color:#6c6f76">7.9y</div>
  </div>
  <div class="ct ctitle" style="top:327px">Miles to Kilometers Conversion
Using Fibonacci Sequence</div>
  <div class="ct cdate" style="top:415px">2025/02/07 14:11</div>
  <div class="ct ctags" style="top:458px">fibonacci-sequence, golden-ratio, mi...</div>
</div>

<div class="card" style="left:1780px">
  <div class="img" style="background:#fff">
    <div class="t" style="left:77px;top:-9px;font-size:24.5px;line-height:39.5px;color:#1c1c1c">Don’t use dryer sheets on towels as
this can reduce the absorbency.</div>
    <div class="t" style="left:77px;top:79px;font-size:24.5px;line-height:39.5px;color:#1c1c1c">Don’t use on microfiber, water-
resistant or gym clothes as this can
also reduce the absorbance ability.</div>
    <div class="t" style="left:77px;top:208px;font-size:24.5px;line-height:39.5px;color:#1c1c1c">Don’t use on flameproof clothes or
pajamas.</div>
    <svg class="a" style="left:43px;top:-18px" width="18" height="36" viewBox="0 0 18 36"><path d="M2 19 L16 33 M16 19 L2 33" stroke="#e3195a" stroke-width="4.8" stroke-linecap="round"/></svg>
    <svg class="a" style="left:43px;top:72px" width="18" height="36" viewBox="0 0 18 36"><path d="M2 19 L16 33 M16 19 L2 33" stroke="#e3195a" stroke-width="4.8" stroke-linecap="round"/></svg>
    <svg class="a" style="left:43px;top:200px" width="18" height="36" viewBox="0 0 18 36"><path d="M2 19 L16 33 M16 19 L2 33" stroke="#e3195a" stroke-width="4.8" stroke-linecap="round"/></svg>
  </div>
  <div class="ct ctitle" style="top:327px">Dryer Sheet Risks and
Limitations</div>
  <div class="ct cdate" style="top:415px">2025/02/07 14:08</div>
  <div class="ct ctags" style="top:458px">dryer-sheets-limits, chemical-manuf...</div>
</div>

<!-- ===== PAGINATION ===== -->
<div class="a" style="left:611px;top:1216px;width:1737px;height:2px;background:#363636"></div>
<div class="inp" style="left:627px;top:1235px;width:183px;height:58px;box-shadow:0 1px 3px rgba(0,0,0,.25)"></div>
<div class="t" style="left:645px;top:1251px;font-size:27px;color:#dadada">12 per page</div>
<div class="t" style="left:827px;top:1251px;font-size:31px;color:#b3b3b3">Showing 1-3 of 3 items</div>
<div class="inp" style="left:1809px;top:1235px;width:179px;height:58px;box-shadow:0 1px 3px rgba(0,0,0,.25)"></div>
<svg class="i" style="left:1827px;top:1248px;color:#a0a0a0" width="32" height="32" viewBox="0 0 24 24" stroke-width="2.1"><path d="m15 18-6-6 6-6"/></svg>
<div class="t" style="left:1867px;top:1253px;font-size:27px;color:#a0a0a0">Previous</div>
<div class="t" style="left:2021px;top:1250px;font-size:29px;color:#dadada">Page 1 of 1</div>
<div class="inp" style="left:2200px;top:1235px;width:131px;height:58px;box-shadow:0 1px 3px rgba(0,0,0,.25)"></div>
<div class="t" style="left:2218px;top:1253px;font-size:27px;color:#a0a0a0">Next</div>
<svg class="i" style="left:2282px;top:1248px;color:#a0a0a0" width="32" height="32" viewBox="0 0 24 24" stroke-width="2.1"><path d="m9 18 6-6-6-6"/></svg>

<!-- bottom-right widget -->
<div class="a" style="left:2314px;top:1527px;width:120px;height:90px;background:#262626;border:2px solid #3c3c3c;border-radius:14px 0 0 0"></div>
<svg class="i" style="left:2356px;top:1543px;color:#c0c0c0" width="32" height="32" viewBox="0 0 24 24" stroke-width="1.75"><path d="M3 12h.01"/><path d="M3 18h.01"/><path d="M3 6h.01"/><path d="M8 12h13"/><path d="M8 18h13"/><path d="M8 6h13"/></svg>


<div class="frame"></div>
</body></html>
